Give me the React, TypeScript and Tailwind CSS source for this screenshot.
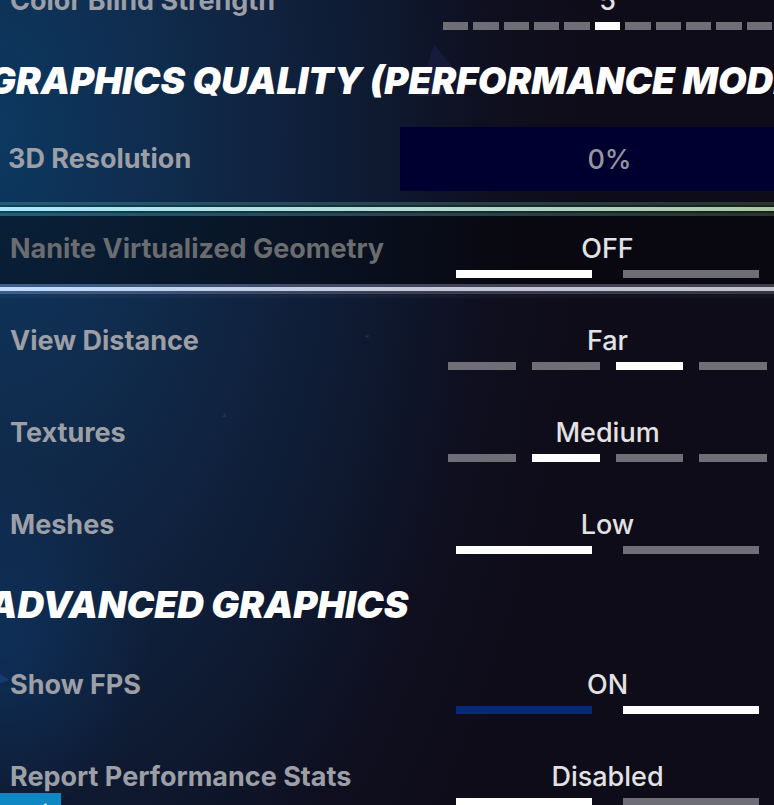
import { useState } from "react";

function Segments({ name, labelId, options, initial, layout, accent = false }: {
  name: string;
  labelId: string;
  options: string[];
  initial: number;
  layout: string;
  accent?: boolean;
}) {
  const [value, setValue] = useState(initial);
  return (
    <div className="flex w-[415px] shrink-0 flex-col items-center">
      <output className="h-8 text-[27px] leading-8 font-medium text-[#e2e2e4]">{options[value]}</output>
      <div role="radiogroup" aria-labelledby={labelId} className={"mt-[5px] flex h-2 " + layout}>
        {options.map((option, i) => (
          <input
            key={option}
            type="radio"
            name={name}
            aria-label={option}
            checked={value === i}
            onChange={() => setValue(i)}
            className={
              "m-0 h-2 min-w-0 flex-1 cursor-pointer appearance-none checked:bg-white " +
              (accent ? "bg-[#08297a]" : "bg-[#6f6e76]")
            }
          />
        ))}
      </div>
    </div>
  );
}

const two = "w-[303px] gap-[31px]";
const four = "w-[319px] gap-4";
const eleven = "w-[329px] gap-[5px]";

function Row({ id, label, options, initial, layout, accent, dimmed = false }: {
  id: string;
  label: string;
  options: string[];
  initial: number;
  layout: string;
  accent?: boolean;
  dimmed?: boolean;
}) {
  return (
    <div className="flex h-[92px] shrink-0 items-start pt-[30px]">
      <span
        id={id}
        className={
          "flex-1 pl-[10px] text-[27px] leading-8 font-bold whitespace-nowrap " +
          (dimmed ? "text-[#6b6c70]" : "text-[#9c9fa5]")
        }
      >
        {label}
      </span>
      <Segments name={id} labelId={id} options={options} initial={initial} layout={layout} accent={accent} />
    </div>
  );
}

function Heading({ children }: { children: string }) {
  return (
    <h2 className="-ml-3 h-[68px] shrink-0 pt-3 text-[37px] leading-[44px] font-black whitespace-nowrap text-white italic">
      {children}
    </h2>
  );
}

export default function App() {
  return (
    <main className="relative h-screen overflow-hidden bg-[#0f0c19] font-['Inter','Liberation_Sans',sans-serif]">
      <div
        aria-hidden="true"
        className="absolute inset-0 bg-[radial-gradient(ellipse_150px_180px_at_0px_640px,#0d3b6e88,transparent),radial-gradient(ellipse_600px_1080px_at_0px_130px,#0c3860_0%,#0f3054_18%,#102746_36%,#0f1e38_54%,#0e162b_70%,#0f0f1f_82%,#0f0c19_100%)]"
      />
      <svg aria-hidden="true" className="absolute inset-0 h-full w-full">
        <path d="M434 44 L458 74 L440 96 L418 96Z" fill="#27306a" opacity=".28" />
        <path d="M0 674 L10 680 L0 683Z" fill="#1b4780" opacity=".6" />
        <path d="M364 336 l4 2 1 -3z M222 417 l3 -4 1 4z" fill="#26375f" opacity=".7" />
      </svg>

      <div className="relative -mt-[45px] -mr-[41px] flex flex-col">
        <Row id="strength" label="Color Blind Strength" options={["0", "1", "2", "3", "4", "5", "6", "7", "8", "9", "10"]} initial={5} layout={eleven} />
        <Heading>GRAPHICS QUALITY (PERFORMANCE MODE)</Heading>

        <div className="flex h-[88px] shrink-0 items-center">
          <label htmlFor="resolution" className="flex-1 pl-2 text-[27px] leading-8 font-bold whitespace-nowrap text-[#9c9fa5]">
            3D Resolution
          </label>
          <input
            id="resolution"
            type="text"
            defaultValue="0%"
            className="h-16 w-[415px] bg-[#000030] pl-1 text-center text-[27px] leading-8 font-medium text-[#96959f]"
          />
        </div>

        <div className="relative">
          <div aria-hidden="true" className="absolute inset-x-0 -top-px">
            <div className="h-[3px] bg-[linear-gradient(90deg,#1e6078,#26454c_50%,#26352a)]" />
            <div className="h-[2px] bg-[linear-gradient(90deg,#123f57,#182b33_50%,#182019)]" />
            <div className="h-1 bg-[linear-gradient(90deg,#a9e8fb,#b4dbd6_50%,#a9c29d)]" />
            <div className="h-[2px] bg-[linear-gradient(90deg,#123f57,#182b33_50%,#182019)]" />
            <div className="h-[3px] bg-[linear-gradient(90deg,#1e6078,#26454c_50%,#26352a)]" />
            <div className="h-[68px] bg-black/40" />
            <div className="h-[3px] bg-[linear-gradient(90deg,#3b5f8c,#43455c_50%,#403f49)]" />
            <div className="h-1 bg-[linear-gradient(90deg,#bfdcff,#c3c8d8_50%,#bfbfc8)]" />
            <div className="h-[3px] bg-[linear-gradient(90deg,#3b5f8c,#3c3e55_50%,#35343f)]" />
            <div className="h-1 bg-white/3" />
          </div>
          <div className="relative">
            <Row id="nanite" label="Nanite Virtualized Geometry" options={["OFF", "ON"]} initial={0} layout={two} dimmed />
          </div>
        </div>

        <Row id="distance" label="View Distance" options={["Near", "Medium", "Far", "Epic"]} initial={2} layout={four} />
        <Row id="textures" label="Textures" options={["Low", "Medium", "High", "Epic"]} initial={1} layout={four} />
        <Row id="meshes" label="Meshes" options={["Low", "High"]} initial={0} layout={two} />
        <Heading>ADVANCED GRAPHICS</Heading>
        <Row id="fps" label="Show FPS" options={["OFF", "ON"]} initial={1} layout={two} accent />
        <Row id="stats" label="Report Performance Stats" options={["Disabled", "Enabled"]} initial={0} layout={two} />
      </div>

      <button type="button" aria-label="Previous" className="absolute bottom-0 left-0 flex h-3 w-[61px] items-end justify-end bg-[#0f87c4] pr-[13px]">
        <svg width="6" height="3" viewBox="0 0 6 3" aria-hidden="true">
          <path d="M1 3 L4 1 L5 3Z" fill="#c5e5f4" />
        </svg>
      </button>
    </main>
  );
}
